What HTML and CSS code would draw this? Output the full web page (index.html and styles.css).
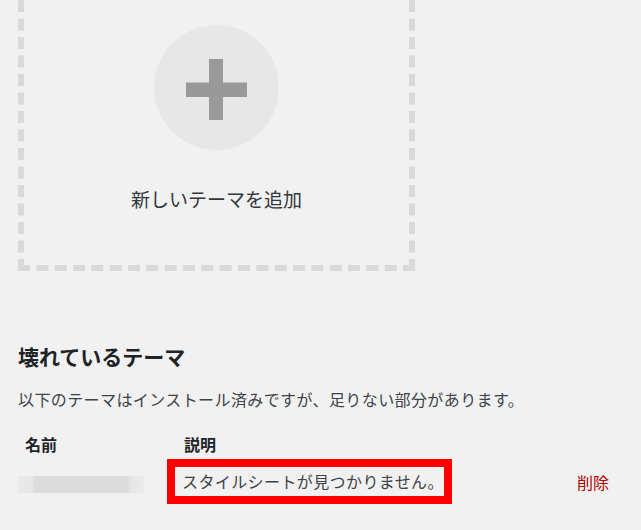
FILE: index.html
```html
<!DOCTYPE html>
<html lang="ja">
<head>
    <meta charset="UTF-8">
    <meta name="viewport" content="width=device-width, initial-scale=1.0">
    <title>テーマ</title>
    <link rel="stylesheet" href="styles.css">
</head>
<body>

<div class="wrap">
    <!-- Add new theme card -->
    <div class="add-new-theme">
        <span class="add-icon">
            <svg viewBox="0 0 125 125" width="125" height="125">
                <rect x="55" y="34" width="14" height="61" fill="#999"/>
                <rect x="32" y="57.5" width="61" height="14.5" fill="#999"/>
            </svg>
        </span>
        <h2>新しいテーマを追加</h2>
    </div>

    <!-- Broken themes -->
    <div class="broken-themes">
        <h3>壊れているテーマ</h3>
        <p>以下のテーマはインストール済みですが、足りない部分があります。</p>

        <div class="broken-table">
            <div class="th th-name">名前</div>
            <div class="th th-desc">説明</div>
            <div class="th"></div>

            <div class="td"><span class="blurred-name"></span></div>
            <div class="td"><span class="desc-box">スタイルシートが見つかりません。</span></div>
            <div class="td"><a href="#" class="delete-link">削除</a></div>
        </div>
    </div>
</div>

</body>
</html>
```

FILE: styles.css
```css
* {
    margin: 0;
    padding: 0;
    box-sizing: border-box;
}

body {
    font-family: "Noto Sans CJK JP", "Noto Sans", sans-serif;
    background-color: #f1f1f1;
    color: #3c434a;
    font-size: 16px;
}

.wrap {
    padding: 0 18px;
}

/* Add new theme card */
.add-new-theme {
    width: 397px;
    height: 271px;
    border: 6px dashed #d9d9d9;
    border-top: none;
    display: flex;
    flex-direction: column;
    align-items: center;
}

.add-icon {
    display: block;
    width: 125px;
    height: 125px;
    margin-top: 25px;
    border-radius: 50%;
    background-color: #e7e7e8;
}

.add-icon svg {
    display: block;
}

.add-new-theme h2 {
    margin-top: 37px;
    font-size: 19px;
    font-weight: normal;
    line-height: 24px;
    color: #32373c;
}

/* Broken themes section */
.broken-themes {
    margin-top: 71px;
}

.broken-themes h3 {
    font-size: 21px;
    font-weight: bold;
    line-height: 28px;
    color: #1d2327;
}

.broken-themes p {
    margin-top: 17px;
    line-height: 24px;
    letter-spacing: 0.4px;
    white-space: nowrap;
}

.broken-table {
    display: grid;
    grid-template-columns: 149px 285px 1fr;
    margin-top: 21px;
}

.th {
    font-weight: bold;
    line-height: 24px;
    color: #1d2327;
    margin-bottom: 3px;
}

.th-name {
    padding-left: 7px;
}

.th-desc {
    padding-left: 17px;
}

.td {
    display: flex;
    align-items: center;
}

.blurred-name {
    display: block;
    width: 126px;
    height: 17px;
    margin-top: 6px;
    background: linear-gradient(to right, #eaeaea 0, #e7e7e7 11%, #dcdcdc 13%, #dcdcdc 87%, #e6e6e6 89%, #ebebeb 100%);
}

.desc-box {
    display: block;
    width: 285px;
    border: 8px solid #ff0000;
    padding: 0 7px;
    line-height: 29px;
    letter-spacing: 0.4px;
    white-space: nowrap;
    color: #3c434a;
}

.delete-link {
    margin-left: 125px;
    white-space: nowrap;
    color: #a00;
    text-decoration: none;
}
```
